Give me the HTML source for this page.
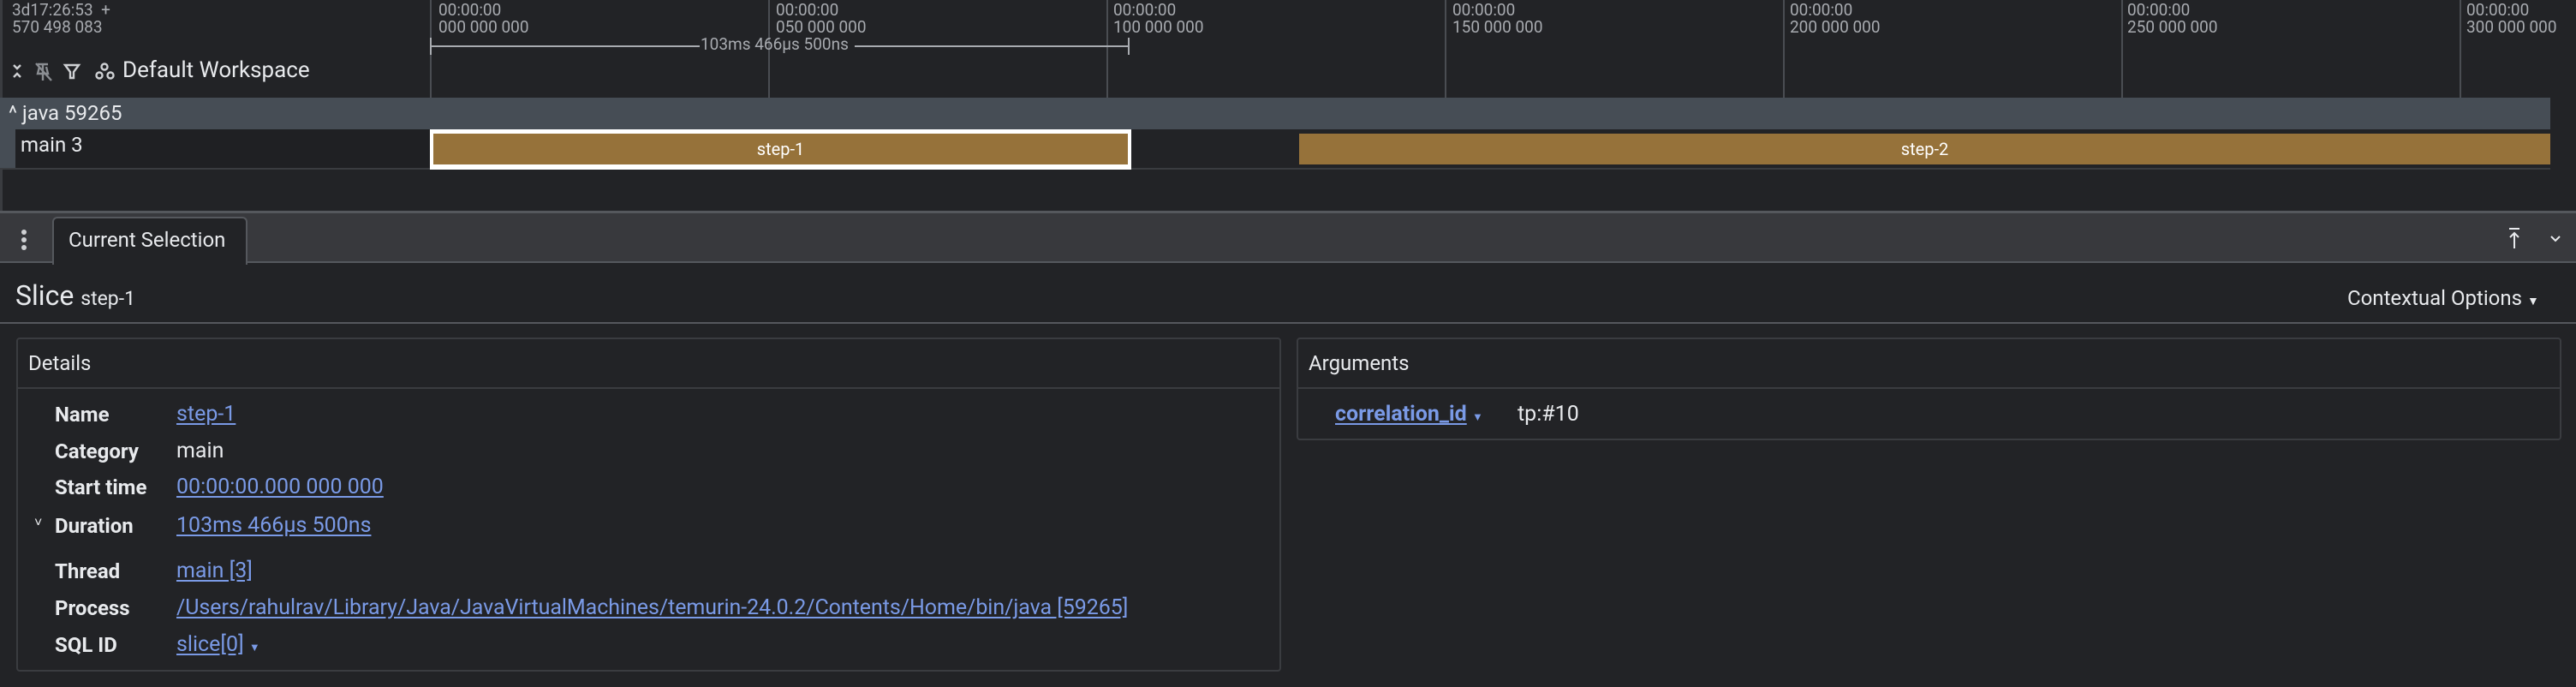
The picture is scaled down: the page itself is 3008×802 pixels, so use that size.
<!DOCTYPE html>
<html><head><meta charset="utf-8"><style>
*{margin:0;padding:0;box-sizing:border-box}
body{width:3008px;height:802px;background:#222326;font-family:"Roboto","Liberation Sans",sans-serif;color:#e8eaed;position:relative;overflow:hidden}
.a{position:absolute;white-space:nowrap}
.tick{position:absolute;top:0;width:2px;height:114px;background:#4a4d52}
.tl{position:absolute;font-size:19px;line-height:20px;color:#a8abb0;top:2px}
.lnk{color:#7a9ae6;text-decoration:underline;text-underline-offset:3px}
.lbl{font-weight:bold;font-size:24px}
.val{font-size:25px}
</style></head><body>
<div class="a" style="left:0;top:0;width:3px;height:247px;background:#3a3c40"></div>
<div class="tick" style="left:502px"></div><div class="tick" style="left:897px"></div><div class="tick" style="left:1292px"></div><div class="tick" style="left:1687px"></div><div class="tick" style="left:2082px"></div><div class="tick" style="left:2477px"></div><div class="tick" style="left:2872px"></div>
<div class="tl" style="left:14px">3d17:26:53 &nbsp;+<br>570 498 083</div>
<div class="tl" style="left:512px">00:00:00<br>000 000 000</div>
<div class="tl" style="left:906px">00:00:00<br>050 000 000</div>
<div class="tl" style="left:1300px">00:00:00<br>100 000 000</div>
<div class="tl" style="left:1696px">00:00:00<br>150 000 000</div>
<div class="tl" style="left:2090px">00:00:00<br>200 000 000</div>
<div class="tl" style="left:2484px">00:00:00<br>250 000 000</div>
<div class="tl" style="left:2880px;width:128px;overflow:hidden">00:00:00<br>300 000 000</div>
<div class="a" style="left:502px;top:53px;width:315px;height:2px;background:#a8abb0"></div>
<div class="a" style="left:998px;top:53px;width:320px;height:2px;background:#a8abb0"></div>
<div class="a" style="left:1317px;top:44px;width:2px;height:20px;background:#a8abb0"></div>
<div class="a" style="left:502px;top:44px;width:2px;height:20px;background:#a8abb0"></div>
<div class="a" style="left:818px;top:42px;font-size:19px;color:#a8abb0;line-height:20px">103ms 466µs 500ns</div>
<svg class="a" style="left:12px;top:70px" width="130" height="26" viewBox="0 0 130 26" fill="none" stroke="#cfd1d4" stroke-width="2.4">
<path d="M4 6l4 4 4-4M4 20l4-4 4 4"/>
<path d="M32 5h12M38 5v14M34 8l-2 8h12l-2-8M38 19v5M30 4l18 20" stroke="#8a8d92"/>
<path d="M64 6h16l-6 8v7h-4v-7z"/>
<circle cx="110" cy="8" r="3.5"/><circle cx="104" cy="18" r="3.5"/><circle cx="117" cy="18" r="3.5"/>
</svg>
<div class="a" style="left:143px;top:67px;font-size:26px;color:#e8eaed">Default Workspace</div>
<div class="a" style="left:0;top:114px;width:2978px;height:37px;background:#464d55"></div>
<div class="a" style="left:10px;top:118px;font-size:24px;color:#e8eaed">^ java 59265</div>
<div class="a" style="left:0;top:151px;width:18px;height:46px;background:#464d55"></div>
<div class="a" style="left:18px;top:151px;width:484px;height:45px;background:#1f2023"></div>
<div class="a" style="left:24px;top:155px;font-size:24px;color:#e8eaed">main 3</div>
<div class="a" style="left:0;top:196px;width:2978px;height:2px;background:#3a3c40"></div>
<div class="a" style="left:502px;top:151px;width:819px;height:47px;background:#fff"></div>
<div class="a" style="left:506px;top:156px;width:811px;height:36px;background:#96723a;color:#fff;font-size:20px;text-align:center;line-height:36px">step-1</div>
<div class="a" style="left:1517px;top:156px;width:1461px;height:36px;background:#96723a;color:#fff;font-size:20px;text-align:center;line-height:36px">step-2</div>
<div class="a" style="left:0;top:246px;width:3008px;height:3px;background:#55585d"></div>
<div class="a" style="left:0;top:249px;width:3008px;height:57px;background:#38393d"></div>
<div class="a" style="left:0;top:305px;width:3008px;height:2px;background:#55585d"></div>
<div class="a" style="left:25px;top:268px;width:6px;height:6px;border-radius:3px;background:#cfd1d4;box-shadow:0 9px 0 #cfd1d4,0 18px 0 #cfd1d4"></div>
<div class="a" style="left:61px;top:253px;width:228px;height:56px;background:#222326;border:2px solid #55585d;border-bottom:none;border-radius:6px 6px 0 0"></div>
<div class="a" style="left:80px;top:266px;font-size:24px;color:#e8eaed">Current Selection</div>
<svg class="a" style="left:2924px;top:264px" width="70" height="30" fill="none" stroke="#e8eaed" stroke-width="2"><path d="M6 3h12M12 26V8M7 13l5-5 5 5"/><path d="M55 12l5 5 5-5"/></svg>
<div class="a" style="left:18px;top:326px;font-size:32px;color:#e8eaed">Slice <span style="font-size:23px">step-1</span></div>
<div class="a" style="left:2741px;top:334px;font-size:24px;color:#e8eaed">Contextual Options <span style="font-size:14px">▼</span></div>
<div class="a" style="left:0;top:376px;width:3008px;height:2px;background:#55585d"></div>
<div class="a" style="left:19px;top:394px;width:1477px;height:390px;border:2px solid #3a3c40;border-radius:4px"></div>
<div class="a" style="left:19px;top:452px;width:1477px;height:2px;background:#3a3c40"></div>
<div class="a" style="left:33px;top:410px;font-size:24px">Details</div>
<div class="a lbl" style="left:64px;top:470px">Name</div><div class="a val lnk" style="left:206px;top:469px">step-1</div>
<div class="a lbl" style="left:64px;top:513px">Category</div><div class="a val" style="left:206px;top:512px">main</div>
<div class="a lbl" style="left:64px;top:555px">Start time</div><div class="a val lnk" style="left:206px;top:554px">00:00:00.000 000 000</div>
<div class="a" style="left:40px;top:600px;font-size:16px">˅</div>
<div class="a lbl" style="left:64px;top:600px">Duration</div><div class="a val lnk" style="left:206px;top:599px">103ms 466µs 500ns</div>
<div class="a lbl" style="left:64px;top:653px">Thread</div><div class="a val lnk" style="left:206px;top:652px">main [3]</div>
<div class="a lbl" style="left:64px;top:696px">Process</div><div class="a val lnk" style="left:206px;top:695px;letter-spacing:-0.05px">/Users/rahulrav/Library/Java/JavaVirtualMachines/temurin-24.0.2/Contents/Home/bin/java [59265]</div>
<div class="a lbl" style="left:64px;top:739px">SQL ID</div><div class="a val" style="left:206px;top:738px"><span class="lnk">slice[0]</span> <span style="font-size:13px;color:#7a9ae6">▼</span></div>
<div class="a" style="left:1514px;top:394px;width:1477px;height:120px;border:2px solid #3a3c40;border-radius:4px"></div>
<div class="a" style="left:1514px;top:452px;width:1477px;height:2px;background:#3a3c40"></div>
<div class="a" style="left:1528px;top:410px;font-size:24px">Arguments</div>
<div class="a val" style="left:1559px;top:469px"><span class="lnk" style="font-weight:bold">correlation_id</span> <span style="font-size:13px;color:#7a9ae6">▼</span></div>
<div class="a val" style="left:1772px;top:469px">tp:#10</div>
</body></html>
